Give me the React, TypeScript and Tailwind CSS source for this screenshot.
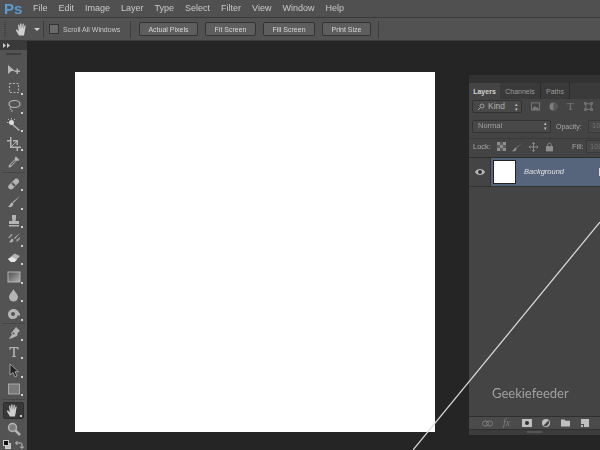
import React from 'react';

const menus = ['File', 'Edit', 'Image', 'Layer', 'Type', 'Select', 'Filter', 'View', 'Window', 'Help'];
const fitButtons = [
  { label: 'Actual Pixels', width: 'w-[59px]' },
  { label: 'Fit Screen', width: 'w-[51px]' },
  { label: 'Fill Screen', width: 'w-[52px]' },
  { label: 'Print Size', width: 'w-[49px]' },
];

const HandIcon: React.FC<{ size?: number }> = ({ size = 16 }) => (
  <svg width={size} height={size} viewBox="0 0 16 16" fill="#d0d0d0">
    <path d="M4.2 14.5 1.2 9.2c-.5-1 .7-1.6 1.4-.8L4 10 3.3 3.6c-.1-1 1.2-1.2 1.4-.2l.8 4V2c0-1 1.3-1 1.4 0l.4 5.3.8-5c.2-1 1.4-.8 1.3.2l-.5 5.2 1.2-3.800c.3-.9 1.4-.6 1.2.4l-1 6.400-.8 3.800z" />
  </svg>
);

// small triangle in the corner of tools with flyouts
const Tool: React.FC<{ children: React.ReactNode; flyout?: boolean }> = ({ children, flyout = true }) => (
  <div className="relative flex h-[18.7px] w-[27px] items-center justify-center">
    {children}
    {flyout && <span className="absolute bottom-[2px] right-[4px] h-[2px] w-[2px] bg-[#d0d0d0]" />}
  </div>
);

const Icon: React.FC<{ children: React.ReactNode }> = ({ children }) => (
  <svg width="14" height="14" viewBox="0 0 14 14" fill="#b4b4b4" stroke="none">
    {children}
  </svg>
);

const Sep = () => <div className="mx-[2px] h-px w-[23px] shrink-0 bg-[#444444]" />;

const Toolbar = () => (
  <div className="flex w-[27px] shrink-0 flex-col bg-[#535353] blur-[0.3px]">
    <div className="flex h-[9px] shrink-0 items-center bg-[#3a3a3a] pl-[3px]">
      <svg width="7" height="5" viewBox="0 0 7 5" fill="#c8c8c8">
        <path d="M0 0l3 2.500L0 5zM4 0l3 2.500L4 5z" />
      </svg>
    </div>
    <div className="mx-[6px] mt-[3px] h-[2px] border-y border-[#3f3f3f]" />
    <div className="h-[5px]" />
    <Tool flyout={false}>
      <Icon>
        <path d="M1 3v9l3.500-3H8z" />
        <path d="M7.500 8.500h2V6.500h1.500v2h2V10h-2v2H9.500v-2h-2z" />
      </Icon>
    </Tool>
    <Tool>
      <Icon>
        <path d="M2.500 2.500h9v9h-9z" fill="none" stroke="#b4b4b4" strokeDasharray="2 1.500" />
      </Icon>
    </Tool>
    <Tool>
      <Icon>
        <ellipse cx="7.500" cy="5" rx="5.500" ry="3.500" fill="none" stroke="#b4b4b4" strokeWidth="1.200" />
        <path d="M3.500 8c-1 2 0 3 1 3s1 1 0 2" fill="none" stroke="#b4b4b4" />
      </Icon>
    </Tool>
    <Tool>
      <Icon>
        <path d="M6 6l7 6-1 1-7-6z" />
        <circle cx="4.500" cy="4.500" r="2.500" fill="#dcdcdc" />
        <path d="M4.500 0v1.500M0 4.500h1.500M8 1l-1 1M1 1l1 1" stroke="#b4b4b4" />
      </Icon>
    </Tool>
    <Tool>
      <Icon>
        <path d="M3 0h1.500v9.500H14V11h-3v3H9.500v-3H3V4.500H0V3h3z" />
        <path d="M6 3h5v5H9.500V4.500H6z" />
        <path d="M4 10 11 3" stroke="#b4b4b4" />
      </Icon>
    </Tool>
    <Tool>
      <Icon>
        <path d="M9 1.500 12.500 5l-1.500 1-.7-.7L4 12l-2.500.5L2 10l6.300-6.300L7.500 3z" />
        <path d="M3.200 10 8 5.300l.8.8L4 10.800z" fill="#535353" />
      </Icon>
    </Tool>
    <div className="h-px shrink-0" />
    <Sep />
    <div className="h-px shrink-0" />
    <Tool>
      <Icon>
        <path d="M1.500 8.500 8 2c2-1.500 5 1 3.800 3.500L5.500 12c-2 1.500-5.500-1-4-3.500z" />
        <path d="M5 6l3 3" stroke="#535353" strokeWidth="2" />
      </Icon>
    </Tool>
    <Tool>
      <Icon>
        <path d="M13 1 6.500 8 5.500 7z" />
        <path d="M5 7.500c-2 .5-1.500 3-4 4 2 1.500 5 .5 5.500-3z" />
      </Icon>
    </Tool>
    <Tool>
      <Icon>
        <path d="M5 1h4v3L8.500 7H12v3H2V7h3.500L5 4zM2 11h10v1.500H2z" />
      </Icon>
    </Tool>
    <Tool>
      <Icon>
        <path d="M13 1 7 6l1 1zM5.500 6.500C4 7 4 9 2 10c1.500 1 4 .5 4.500-2z" />
        <path d="M1 6l3-4 2 .5-3 3.500zM9 8l4-3v2l-3 3z" opacity="0.7" />
      </Icon>
    </Tool>
    <Tool>
      <Icon>
        <path d="M1 8 7.500 2.500 13 5l-5.500 6H4z" />
        <path d="M1 8l3 3h3.500L10 8.500 5 6z" fill="#e6e6e6" />
      </Icon>
    </Tool>
    <Tool>
      <svg width="14" height="14" viewBox="0 0 14 14">
        <defs>
          <linearGradient id="grad" x1="0" y1="0" x2="1" y2="1">
            <stop offset="0" stopColor="#4e4e4e" />
            <stop offset="1" stopColor="#b0b0b0" />
          </linearGradient>
        </defs>
        <rect x="1" y="2" width="12" height="10" fill="url(#grad)" stroke="#b4b4b4" />
      </svg>
    </Tool>
    <Tool>
      <Icon>
        <path d="M6.500 1C7.500 4 11 6 11 9a4.500 4.500 0 0 1-9 0c0-3 3.500-5 4.500-8z" />
      </Icon>
    </Tool>
    <Tool>
      <Icon>
        <path d="M1 7c0-3 3-5 6-5 2 0 3 1 4 2l2 3c.5 1-.5 2-1.500 1.500L11 8c-1 3-3 4-5.500 4C3 12 1 10 1 7z" />
        <circle cx="6" cy="7" r="2" fill="#535353" />
      </Icon>
    </Tool>
    <Sep />
    <Tool>
      <Icon>
        <path d="M9 1 13 5 11 6.500 10 10l-6 2.500L2 13l.5-1L5 8.500 4 7.500 7.500 3z" />
        <circle cx="6.500" cy="7.500" r="1" fill="#535353" />
      </Icon>
    </Tool>
    <Tool>
      <Icon>
        <path d="M2.500 2h9v3h-.7c-.1-1-.6-2-1.800-2H7.800v8l1.400.4v.6H4.800v-.6L6.200 11V3H5C3.800 3 3.300 4 3.200 5h-.7z" />
      </Icon>
    </Tool>
    <Tool>
      <svg width="14" height="14" viewBox="0 0 14 14">
        <path d="M3 0v11l3-2.500 2 4.500 2-1-2-4.300h3.500z" fill="#232323" stroke="#b4b4b4" strokeWidth="0.8" />
      </svg>
    </Tool>
    <Tool>
      <svg width="14" height="14" viewBox="0 0 14 14">
        <rect x="1.500" y="2" width="11" height="10" fill="#7a7a7a" stroke="#a8a8a8" />
      </svg>
    </Tool>
    <div className="h-px shrink-0" />
    <Sep />
    <div className="h-[2px] shrink-0" />
    <div className="relative mx-[3px] flex h-[17px] w-[21px] shrink-0 items-center justify-center rounded-[2px] border border-[#2e2e2e] bg-[#383838]">
      <HandIcon size={15} />
      <span className="absolute bottom-[1px] right-[1px] h-[2px] w-[2px] bg-[#d0d0d0]" />
    </div>
    <Tool flyout={false}>
      <Icon>
        <circle cx="5.500" cy="5.500" r="4" fill="#7c7c7c" stroke="#b4b4b4" strokeWidth="1.500" />
        <path d="M8.500 8.500 13 13" stroke="#b4b4b4" strokeWidth="2.500" />
      </Icon>
    </Tool>
    <div className="relative mt-[2px] h-[10px] shrink-0">
      <span className="absolute left-[5px] top-[3px] h-[6px] w-[6px] border border-[#ccc] bg-[#bdbdbd]" />
      <span className="absolute left-[3px] top-[0px] h-[6px] w-[6px] border border-[#ccc] bg-[#111]" />
      <svg className="absolute left-[15px] top-0" width="9" height="9" viewBox="0 0 9 9" fill="none" stroke="#c8c8c8">
        <path d="M1 3h4.500c1 0 1.500 .5 1.500 1.500V8M.5 3 2.500 1M.5 3l2 2M5 6.500 7 8.500 9 6.500" />
      </svg>
    </div>
  </div>
);

const LayersPanel = () => (
  <div className="flex h-[360px] w-[131px] shrink-0 flex-col overflow-hidden rounded-tl-[2px] bg-[#444444] text-[7.500px] leading-none text-[#a8a8a8] blur-[0.3px]">
    <div className="h-[8px] shrink-0 bg-[#323232]" />
    <div className="flex h-[16px] shrink-0 items-stretch bg-[#3a3a3a] text-[7px]">
      <div className="flex w-[31px] items-center justify-center bg-[#444444] font-bold text-[#d4d4d4]">Layers</div>
      <div className="flex w-[41px] items-center justify-center border-r border-[#2c2c2c] text-[#9c9c9c]">Channels</div>
      <div className="flex w-[29px] items-center justify-center border-r border-[#2c2c2c] text-[#9c9c9c]">Paths</div>
    </div>
    <div className="flex h-[15px] shrink-0 items-center pl-[3px]">
      <div className="flex h-[13px] w-[50px] shrink-0 items-center rounded-[2px] border border-[#333] bg-[#484848] pl-[4px] pr-[3px]">
        <svg width="8" height="8" viewBox="0 0 8 8" fill="none" stroke="#a0a0a0">
          <circle cx="5" cy="3" r="2" />
          <path d="M3.500 4.500 1 7" />
        </svg>
        <span className="ml-[3px] text-[8.500px] text-[#b0b0b0]">Kind</span>
        <span className="ml-auto text-[5px] leading-[5px] text-[#c0c0c0]">
          ▴
          <br />▾
        </span>
      </div>
      <div className="ml-[9px] flex items-center gap-[9px]">
        <svg width="9" height="9" viewBox="0 0 10 9">
          <rect x="0.500" y="0.500" width="9" height="8" fill="none" stroke="#7d7d7d" />
          <path d="M1 8 4 4l2 2 1-1 2 3z" fill="#7d7d7d" />
        </svg>
        <svg width="9" height="9" viewBox="0 0 9 9">
          <circle cx="4.500" cy="4.500" r="4" fill="#7d7d7d" />
          <path d="M4.500.5a4 4 0 0 1 0 8z" fill="#565656" />
        </svg>
        <span className="w-[7px] font-['Liberation_Serif',serif] text-[11px] text-[#7d7d7d]">T</span>
        <svg className="ml-[1px]" width="9" height="9" viewBox="0 0 10 10" fill="none" stroke="#7d7d7d">
          <path d="M2 2h6v6H2zM.5.500h2v2h-2zM7.500.500h2v2h-2zM.5 7.500h2v2h-2zM7.500 7.500h2v2h-2z" />
        </svg>
      </div>
    </div>
    <div className="flex h-[24px] shrink-0 items-center pl-[3px]">
      <div className="flex h-[13px] w-[79px] shrink-0 items-center rounded-[2px] border border-[#333] bg-[#484848] pl-[5px] pr-[3px]">
        <span className="text-[#a0a0a0]">Normal</span>
        <span className="ml-auto text-[5px] leading-[5px] text-[#c0c0c0]">
          ▴
          <br />▾
        </span>
      </div>
      <span className="ml-[5px] w-[27px] shrink-0 whitespace-nowrap text-[7px]">Opacity:</span>
      <span className="ml-[5px] flex h-[13px] w-[30px] shrink-0 items-center border border-[#3a3a3a] bg-[#484848] pl-[3px] text-[#707070]">100%</span>
    </div>
    <div className="h-px shrink-0 bg-[#3a3a3a]" />
    <div className="flex h-[18px] shrink-0 items-center pb-[3px] pl-[4px]">
      <span className="w-[17px] shrink-0">Lock:</span>
      <div className="ml-[7px] flex items-center gap-[6px]">
        <svg width="9" height="9" viewBox="0 0 9 9" fill="#8e8e8e">
          <path d="M0 0h3v3H0zM6 0h3v3H6zM3 3h3v3H3zM0 6h3v3H0zM6 6h3v3H6z" />
          <path d="M3 0h3v3H3zM0 3h3v3H0zM6 3h3v3H6zM3 6h3v3H3z" fill="#5f5f5f" />
        </svg>
        <svg width="11" height="10" viewBox="0 0 12 10" fill="#8e8e8e">
          <path d="M11.500 0 5 6 4.500 5.500zM4 5.500C2 6 3 8 0 9c2 1.200 5 .5 5-2.500z" />
        </svg>
        <svg width="9" height="10" viewBox="0 0 10 10" fill="none" stroke="#8e8e8e">
          <path d="M5 0v10M0 5h10" />
          <path d="M3.500 1.500 5 0l1.500 1.500M3.500 8.500 5 10l1.500-1.500M1.500 3.500 0 5l1.500 1.500M8.500 3.500 10 5 8.500 6.500" />
        </svg>
        <svg className="ml-[2px]" width="7" height="10" viewBox="0 0 8 10" fill="#8e8e8e">
          <path d="M0 4h8v6H0z" />
          <path d="M2 4V2.500a2 2 0 0 1 4 0V4" fill="none" stroke="#8e8e8e" />
        </svg>
      </div>
      <span className="ml-[19px] w-[10px] shrink-0">Fill:</span>
      <span className="ml-[4px] flex h-[13px] w-[30px] shrink-0 items-center border border-[#3a3a3a] bg-[#484848] pl-[3px] text-[#707070]">100%</span>
    </div>
    <div className="h-px shrink-0 bg-[#2e2e2e]" />
    <div className="flex h-[29px] shrink-0 border-b border-[#333]">
      <div className="flex w-[22px] items-center justify-center border-r border-[#333]">
        <svg width="10" height="8" viewBox="0 0 10 8">
          <path d="M0 4c2-4 8-4 10 0-2 4-8 4-10 0z" fill="#bcbcbc" />
          <circle cx="5" cy="4" r="2" fill="#333" />
        </svg>
      </div>
      <div className="flex flex-1 items-center bg-[#56657b] pl-[2px]">
        <div className="h-[24px] w-[23px] border border-[#222] bg-white" />
        <span className="ml-[8px] text-[7.500px] italic text-[#e2e2e2]">Background</span>
        <span className="ml-auto mr-[-1px] h-[8px] w-[2px] border-l border-[#ddd]" />
      </div>
    </div>
    <div className="flex flex-1 items-end pb-[16px] pl-[23px]">
      <span className="font-['Lato',sans-serif] text-[13px] leading-none text-[#a0a0a0]">Geekiefeeder</span>
    </div>
    <div className="flex h-[14px] shrink-0 items-center border-y border-[#2f2f2f] bg-[#4b4b4b] pl-[13px]">
      <div className="flex items-center gap-[10px]">
        <svg width="11" height="7" viewBox="0 0 11 7" fill="none" stroke="#7d7d7d">
          <rect x="0.500" y="1" width="6" height="5" rx="2.500" />
          <rect x="4.500" y="1" width="6" height="5" rx="2.500" />
        </svg>
        <span className="w-[9px] font-['Liberation_Serif',serif] text-[10px] italic text-[#7d7d7d]">fx</span>
        <svg width="10" height="8" viewBox="0 0 10 8">
          <rect width="10" height="8" fill="#c0c0c0" />
          <circle cx="5" cy="4" r="2" fill="#333" />
        </svg>
        <svg width="8" height="8" viewBox="0 0 9 9">
          <circle cx="4.500" cy="4.500" r="4.500" fill="#c0c0c0" />
          <path d="M7.500 1.500 1.500 7.500A4.500 4.500 0 0 0 7.500 1.500z" fill="#444" />
        </svg>
        <svg className="ml-[1px]" width="9" height="8" viewBox="0 0 10 8" fill="#c0c0c0">
          <path d="M0 0h4l1 1.500h5V8H0z" />
        </svg>
        <svg className="ml-[1px]" width="8" height="8" viewBox="0 0 8 8" fill="#c0c0c0">
          <path d="M0 0h8v8H3V5H0z" />
          <path d="M0 6h2v2H0z" />
        </svg>
      </div>
    </div>
    <div className="flex h-[5px] shrink-0 justify-center bg-[#3c3c3c]">
      <span className="mt-[1px] h-[2px] w-[15px] bg-[#555]" />
    </div>
  </div>
);

export default function App() {
  return (
    <div className="flex h-[450px] w-[600px] flex-col overflow-hidden bg-[#252525] font-['Liberation_Sans',sans-serif]">
      {/* menu bar */}
      <div className="flex h-[17px] shrink-0 items-center bg-[#505050]">
        <span className="ml-[4px] w-[29px] text-[15px] font-bold leading-none text-[#5b9bd1] blur-[0.3px]">Ps</span>
        <div className="flex gap-[11px] text-[9px] leading-none text-[#c8c8c8] blur-[0.3px]">
          {menus.map((m) => (
            <span key={m}>{m}</span>
          ))}
        </div>
      </div>
      {/* options bar */}
      <div className="flex h-[24px] shrink-0 items-center border-y border-[#3a3a3a] bg-[#525252]">
        <span className="ml-[4px] h-[15px] w-[2px] border-x border-dotted border-[#3f3f3f]" />
        <div className="ml-[9px]">
          <HandIcon size={15} />
        </div>
        <span className="ml-[4px] h-0 w-0 border-x-[3px] border-t-[3px] border-x-transparent border-t-[#d0d0d0]" />
        <span className="ml-[3px] h-[17px] w-px bg-[#3c3c3c]" />
        <span className="ml-[5px] h-[10px] w-[10px] border border-[#333] bg-[#6a6a6a]" />
        <span className="ml-[4px] w-[57px] whitespace-nowrap text-[7px] leading-none text-[#c8c8c8] blur-[0.3px]">Scroll All Windows</span>
        <span className="ml-[10px] h-[17px] w-px bg-[#3c3c3c]" />
        <div className="ml-[8px] flex gap-[7px]">
          {fitButtons.map((b) => (
            <div
              key={b.label}
              className={`flex h-[14px] ${b.width} items-center justify-center rounded-[2px] border border-[#333] bg-[#5e5e5e] text-[7px] leading-none text-[#d8d8d8]`}
            >
              <span className="blur-[0.3px]">{b.label}</span>
            </div>
          ))}
        </div>
        <span className="ml-[7px] h-[17px] w-px bg-[#3c3c3c]" />
      </div>
      <div className="flex min-h-0 flex-1">
        <Toolbar />
        {/* workspace */}
        <div className="relative flex flex-1 items-start overflow-hidden bg-[#252525] pl-[48px] pt-[31px]">
          <div className="h-[360px] w-[360px] shrink-0 bg-white" />
          <div className="ml-[34px] mt-[3px]">
            <LayersPanel />
          </div>
          {/* diagonal line that runs over the canvas and the panel */}
          <svg className="absolute left-[386px] top-[181px]" width="187" height="228" viewBox="0 0 187 228">
            <path d="M187 0 0 228" stroke="#dcdcdc" strokeWidth="1.200" fill="none" />
          </svg>
        </div>
      </div>
    </div>
  );
}
